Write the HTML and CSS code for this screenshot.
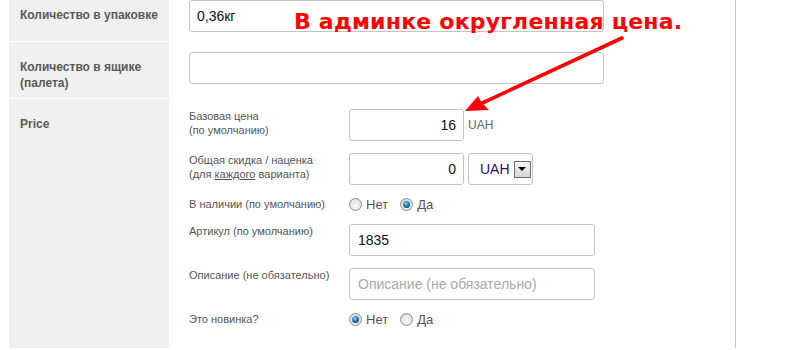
FILE: index.html
```html
<!DOCTYPE html>
<html>
<head>
<meta charset="utf-8">
<link rel="stylesheet" href="styles.css">
</head>
<body>
<div class="panel">
  <div class="row">
    <div class="label">Количество в упаковке</div>
    <div class="field"><input class="text wide" value="0,36кг"></div>
  </div>
  <div class="row">
    <div class="label">Количество в ящике<br>(палета)</div>
    <div class="field"><input class="text wide" value=""></div>
  </div>
  <div class="row last">
    <div class="label">Price</div>
    <div class="field">
      <div class="sub">
        <div class="sublabel">Базовая цена<br>(по умолчанию)</div>
        <input class="text short num" value="16">
        <span class="unit">UAH</span>
      </div>
      <div class="sub">
        <div class="sublabel">Общая скидка / наценка<br>(для <u>каждого</u> варианта)</div>
        <input class="text short num" value="0">
        <div class="select"><span class="sel-text">UAH</span><span class="sel-btn"><span class="tri"></span></span></div>
      </div>
      <div class="sub radios">
        <div class="sublabel">В наличии (по умолчанию)</div>
        <span class="radio"></span><span class="rtext">Нет</span>
        <span class="radio on"></span><span class="rtext">Да</span>
      </div>
      <div class="sub">
        <div class="sublabel">Артикул (по умолчанию)</div>
        <input class="text mid" value="1835">
      </div>
      <div class="sub">
        <div class="sublabel">Описание (не обязательно)</div>
        <input class="text mid" placeholder="Описание (не обязательно)">
      </div>
      <div class="sub radios">
        <div class="sublabel">Это новинка?</div>
        <span class="radio on"></span><span class="rtext">Нет</span>
        <span class="radio"></span><span class="rtext">Да</span>
      </div>
    </div>
  </div>
</div>
<div class="note">В админке округленная цена.</div>
<svg class="arrow" width="792" height="350" viewBox="0 0 792 350">
  <line x1="622" y1="38" x2="478" y2="105" stroke="#f00" stroke-width="3.6" stroke-linecap="round"/>
  <polygon points="465,111 478,96 482,103 489,110" fill="#f00"/>
</svg>
</body>
</html>
```
FILE: styles.css
```css
html, body {
  margin: 0;
  padding: 0;
  background: #fff;
  overflow: hidden;
}
body {
  width: 792px;
  height: 350px;
  position: relative;
  font-family: "Liberation Sans", Arial, sans-serif;
  color: #555;
}
.panel {
  margin-top: -10px;
  margin-left: 9px;
  width: 726px;
  border-right: 1px solid #c8c8c8;
}
.row {
  display: grid;
  grid-template-columns: 160px 1fr;
}
.label {
  background: #f0f0f0;
  border-bottom: 1px solid #fff;
  font-size: 12px;
  font-weight: bold;
  line-height: 16px;
  padding: 17px 11px 7px;
  color: #5a5a5a;
}
.row.last .label {
  border-bottom: 0;
}
.field {
  padding: 10px 20px;
}
.row.last .field {
  padding-bottom: 9px;
}
.text {
  box-sizing: border-box;
  height: 32px;
  border: 1px solid #c4c4c4;
  border-radius: 3px;
  padding: 0 7px;
  font-family: "Liberation Sans", Arial, sans-serif;
  font-size: 14px;
  color: #111;
  background: #fff;
  outline: none;
  margin: 0;
}
.text::placeholder {
  color: #aaa;
}
.wide { width: 415px; }
.short { width: 115px; }
.mid { width: 246px; padding-left: 8px; }
.num { text-align: right; }
.sub {
  display: flex;
  align-items: flex-start;
  margin-bottom: 12px;
}
.sublabel {
  width: 160px;
  flex: none;
  font-size: 11px;
  line-height: 14px;
}
.unit {
  align-self: center;
  margin-left: 4px;
  font-size: 12px;
  color: #666;
}
.select {
  box-sizing: border-box;
  height: 32px;
  width: 65px;
  margin-left: 4px;
  border: 1px solid #c4c4c4;
  border-radius: 3px;
  display: flex;
  align-items: center;
  padding-left: 11px;
}
.sel-text {
  font-size: 14px;
  color: #300b6a;
  margin-right: 4px;
}
.sel-btn {
  box-sizing: border-box;
  width: 17px;
  height: 17px;
  border: 1px solid #6f6f6f;
  background: linear-gradient(#f6f6f6, #d6d6d6);
  display: flex;
  align-items: center;
  justify-content: center;
}
.tri {
  width: 0;
  height: 0;
  border-left: 4px solid transparent;
  border-right: 4px solid transparent;
  border-top: 4px solid #000;
}
.radios {
  align-items: center;
  height: 15px;
}
.radios .sublabel {
  line-height: 15px;
}
.radio {
  box-sizing: border-box;
  width: 13px;
  height: 13px;
  border-radius: 50%;
  border: 1px solid #8f8f8f;
  background: radial-gradient(circle at 50% 60%, #fafafa 0, #e4e4e4 55%, #c9c9c9 100%);
  position: relative;
  flex: none;
}
.radio.on::after {
  content: "";
  position: absolute;
  left: 2px;
  top: 2px;
  width: 7px;
  height: 7px;
  border-radius: 50%;
  background: radial-gradient(circle at 40% 35%, #8fd3ff 0, #2a8fd0 35%, #0b4f86 75%, #083b66 100%);
}
.rtext {
  font-size: 13px;
  margin-left: 4px;
  margin-right: 12px;
  line-height: 15px;
}
.note {
  position: absolute;
  left: 294px;
  top: 11px;
  font-family: "DejaVu Sans", Verdana, sans-serif;
  font-weight: bold;
  font-size: 22px;
  line-height: 22px;
  letter-spacing: 0.22px;
  color: #f00;
  white-space: nowrap;
}
.arrow {
  position: absolute;
  left: 0;
  top: 0;
  pointer-events: none;
}
```
